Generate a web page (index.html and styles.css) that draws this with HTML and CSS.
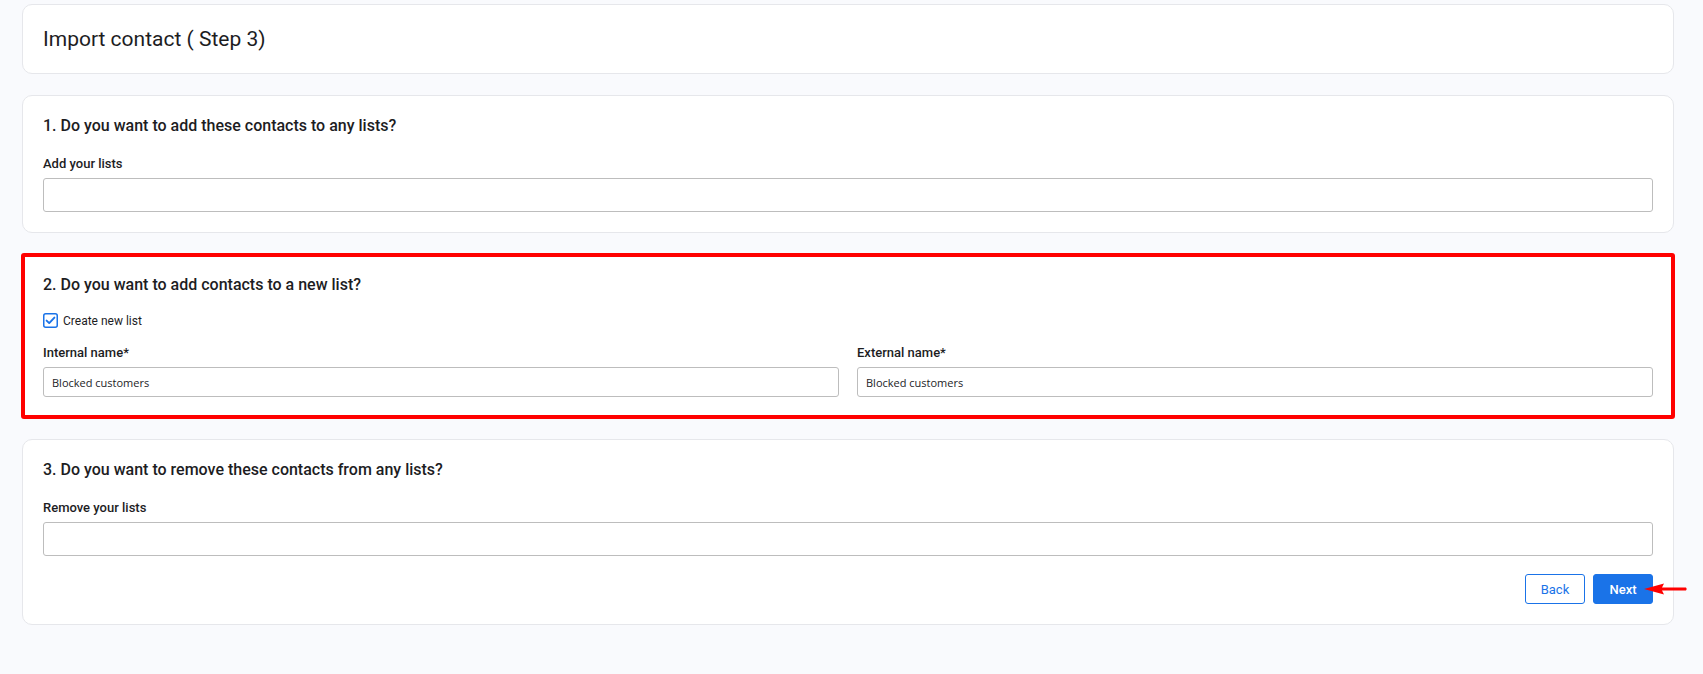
FILE: index.html
```html
<!DOCTYPE html>
<html lang="en">
<head>
  <meta charset="UTF-8">
  <title>Import contact</title>
  <link rel="stylesheet" href="styles.css">
</head>
<body>

<div class="page">
  <div class="card">
    <h1 class="page-title">Import contact ( Step 3)</h1>
  </div>

  <div class="card">
    <h2>1. Do you want to add these contacts to any lists?</h2>
    <label class="field-label">Add your lists</label>
    <input class="input input-tall" type="text">
  </div>

  <div class="card highlighted">
    <h2>2. Do you want to add contacts to a new list?</h2>
    <label class="check">
      <span class="check-box">
        <svg width="15" height="15" viewBox="0 0 15 15">
          <rect x="0.75" y="0.75" width="13.5" height="13.5" rx="2" fill="#fff" stroke="#1a73e8" stroke-width="1.5"/>
          <path d="M3.6 7.6 L6.2 10.1 L11.4 4.6" fill="none" stroke="#1a73e8" stroke-width="1.9" stroke-linecap="round" stroke-linejoin="round"/>
        </svg>
      </span>
      Create new list
    </label>
    <div class="two-cols">
      <div>
        <label class="field-label">Internal name*</label>
        <input class="input" type="text" value="Blocked customers">
      </div>
      <div>
        <label class="field-label">External name*</label>
        <input class="input" type="text" value="Blocked customers">
      </div>
    </div>
  </div>

  <div class="card">
    <h2>3. Do you want to remove these contacts from any lists?</h2>
    <label class="field-label">Remove your lists</label>
    <input class="input input-tall" type="text">
    <div class="actions">
      <button class="btn btn-outline">Back</button>
      <button class="btn btn-primary">Next
        <svg class="pointer" width="44" height="12" viewBox="0 0 44 12">
          <path d="M0 6 L20 0.5 L18 4.5 L42 4.5 Q43.5 6 42 7.5 L18 7.5 L20 11.5 Z" fill="#f00"/>
        </svg>
      </button>
    </div>
  </div>
</div>

</body>
</html>
```

FILE: styles.css
```css
body {
  margin: 0;
  padding: 0;
  background-color: #f9fafd;
  font-family: Roboto, "Liberation Sans", sans-serif;
  color: #1d1d1f;
}
.page {
  width: 1652px;
  margin-left: 22px;
  padding-top: 4px;
}
.card {
  background-color: #fff;
  border: 1px solid #e6e7eb;
  border-radius: 10px;
  padding: 20px;
  margin-bottom: 21px;
}
.highlighted {
  outline: 4px solid #ff0000;
  outline-offset: -3px;
  border-radius: 2px;
}
.page-title {
  margin: 0;
  font-size: 21px;
  font-weight: 400;
  line-height: 28px;
}
h2 {
  margin: 0 0 20px 0;
  font-size: 16px;
  font-weight: 500;
  line-height: 20px;
}
.field-label {
  display: block;
  font-size: 13px;
  font-weight: 500;
  line-height: 15px;
  margin-bottom: 7px;
}
.input {
  display: block;
  box-sizing: border-box;
  width: 100%;
  height: 30px;
  padding: 0 8px;
  border: 1px solid #bdbdbd;
  border-radius: 3px;
  font-family: "Open Sans", sans-serif;
  font-size: 11px;
  color: #1d1d1f;
}
.input-tall {
  height: 34px;
}
.check {
  display: flex;
  align-items: center;
  gap: 5px;
  font-size: 12px;
  margin-top: -2px;
  margin-bottom: 17px;
}
.check-box {
  display: flex;
}
.two-cols {
  display: grid;
  grid-template-columns: 1fr 1fr;
  gap: 18px;
}
.actions {
  display: flex;
  justify-content: flex-end;
  gap: 8px;
  margin-top: 18px;
}
.btn {
  position: relative;
  width: 60px;
  height: 30px;
  border-radius: 3px;
  font-family: Roboto, sans-serif;
  font-size: 13px;
  font-weight: 500;
  cursor: pointer;
}
.btn-outline {
  background-color: #fff;
  border: 1px solid #1a73e8;
  color: #1a73e8;
  font-weight: 400;
}
.btn-primary {
  background-color: #1a73e8;
  border: 1px solid #1a73e8;
  color: #fff;
}
.pointer {
  position: absolute;
  left: 50px;
  top: 8px;
}
```
